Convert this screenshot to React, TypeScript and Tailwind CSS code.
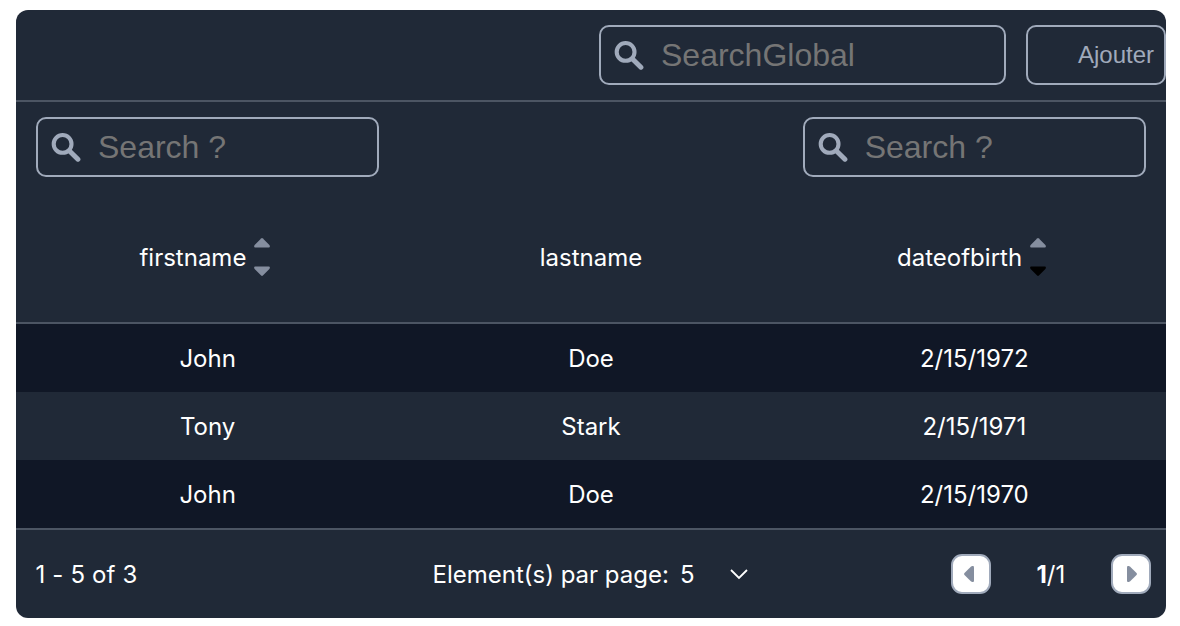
import React from "react";

type SortState = "none" | "desc";

const rows: string[][] = [
  ["John", "Doe", "2/15/1972"],
  ["Tony", "Stark", "2/15/1971"],
  ["John", "Doe", "2/15/1970"],
];

function SearchIcon() {
  return (
    <svg className="h-[30px] w-[30px] shrink-0" viewBox="0 0 30 30" fill="none" stroke="#a0aabb" strokeLinecap="round">
      <circle cx="11.6" cy="11.9" r="8.9" strokeWidth="4.1" />
      <path d="M18.5 19L26.9 27.2" strokeWidth="5" />
    </svg>
  );
}

function SearchBox({ placeholder, className }: { placeholder: string; className: string }) {
  return (
    <label className={`flex h-[60px] items-center rounded-[10px] border-2 border-[#a0aabb] pl-[13px] ${className}`}>
      <SearchIcon />
      <input
        className="ml-[17px] min-w-0 flex-1 bg-transparent font-['Liberation_Sans',sans-serif] text-[32px] leading-9 text-white outline-none placeholder:text-[#757575]"
        placeholder={placeholder}
      />
    </label>
  );
}

function SortIcon({ state }: { state: SortState }) {
  return (
    <svg className="mr-1.5 ml-[7.5px] h-[38px] w-4" viewBox="0 0 16 38">
      <path d="M7.1 .5Q8 -.3 8.9 .5L15.4 7Q16.6 9.3 14.8 9.5H1.2Q-.6 9.3 .6 7Z" fill="#858e9f" />
      <path
        d="M7.1 37.5Q8 38.3 8.9 37.5L15.4 31Q16.6 28.7 14.8 28.5H1.2Q-.6 28.7 .6 31Z"
        fill={state === "desc" ? "#000000" : "#858e9f"}
      />
    </svg>
  );
}

function PageButton({ label, d, className }: { label: string; d: string; className: string }) {
  return (
    <button
      aria-label={label}
      className={`flex h-10 w-10 items-center justify-center rounded-[11px] border-2 border-[#a0aabb] bg-white ${className}`}
    >
      <svg className="h-4 w-[10px]" viewBox="0 0 10 16">
        <path d={d} fill="#858e9f" />
      </svg>
    </button>
  );
}

function ColumnHeader({ name, searchable, sort }: { name: string; searchable?: boolean; sort?: SortState }) {
  return (
    <div className="flex flex-col px-5 pt-[15px]">
      <div className="h-[60px]">{searchable && <SearchBox placeholder="Search ?" className="w-full" />}</div>
      <div className="mt-[61px] flex h-[38px] items-center justify-center">
        <span className="pt-0.5">{name}</span>
        {sort && <SortIcon state={sort} />}
      </div>
    </div>
  );
}

export default function App() {
  return (
    <div className="h-[626px] bg-white pt-[10px] pl-4">
      <div className="flex h-[608px] w-[1150px] flex-col overflow-hidden rounded-[12px] bg-[#202937] font-['Inter',sans-serif] text-2xl text-white">
        <div className="flex h-[92px] justify-end gap-5 border-b-2 border-[#4c5563] pt-[15px]">
          <SearchBox placeholder="SearchGlobal" className="w-[407px]" />
          <button className="h-[60px] w-[140px] rounded-[10px] border-2 border-[#a0aabb] pr-[10px] text-right font-['Liberation_Sans',sans-serif] text-[#a0aabb]">
            Ajouter
          </button>
        </div>
        <div className="grid h-[222px] grid-cols-3 border-b-2 border-[#4c5563]">
          <ColumnHeader name="firstname" searchable sort="none" />
          <ColumnHeader name="lastname" />
          <ColumnHeader name="dateofbirth" searchable sort="desc" />
        </div>
        <div>
          {rows.map((row, i) => (
            <div key={i} className="grid h-[68px] grid-cols-3 items-center pt-0.5 text-center odd:bg-[#101726]">
              {row.map((cell) => (
                <span key={cell}>{cell}</span>
              ))}
            </div>
          ))}
        </div>
        <div className="grid h-[90px] grid-cols-3 items-center border-t-2 border-[#4c5563]">
          <span className="pt-0.5 pl-[19.5px] tracking-[0.15px]">1 - 5 of 3</span>
          <div className="flex items-center justify-center pr-0.5 whitespace-nowrap">
            <span className="pt-0.5">Element(s) par page:</span>
            <span className="ml-[11px] pt-0.5">5</span>
            <svg className="ml-[35px] h-[11px] w-[18px]" viewBox="0 0 18 11" fill="none" stroke="white" strokeWidth="1.8">
              <path d="M1 1L9 9L17 1" />
            </svg>
          </div>
          <div className="flex items-center justify-between pr-[15px] pl-[168px]">
            <PageButton label="Previous page" className="pr-1" d="M0.5 7Q-.4 8 .5 9L6.8 15.3Q10 17.2 10 14.4V1.6Q10 -1.2 6.8 .7Z" />
            <span className="pt-0.5">
              <b className="font-bold">1</b>/1
            </span>
            <PageButton label="Next page" className="pl-0.5" d="M9.5 7Q10.4 8 9.5 9L3.2 15.3Q0 17.2 0 14.4V1.6Q0 -1.2 3.2 .7Z" />
          </div>
        </div>
      </div>
    </div>
  );
}
